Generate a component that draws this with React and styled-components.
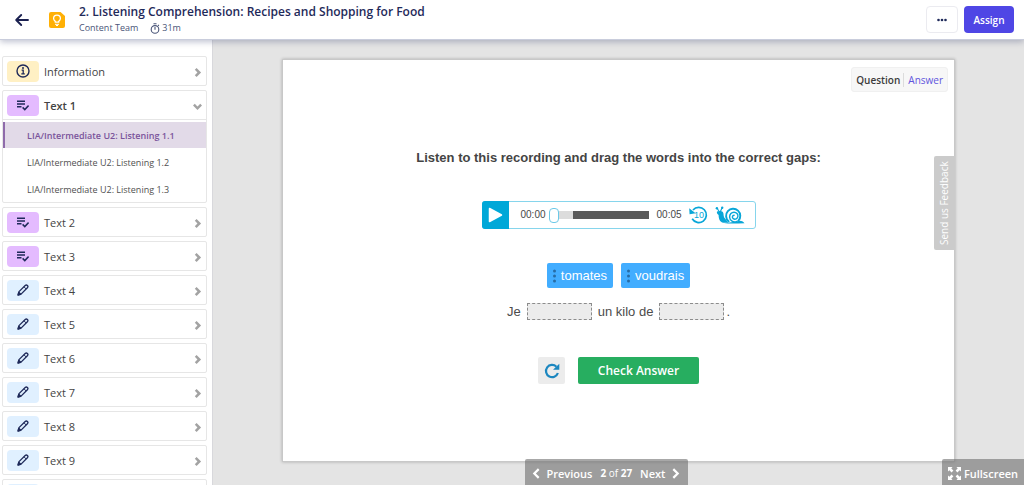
import React from "react";
import styled, { createGlobalStyle, css } from "styled-components";

const ui = `"Open Sans", "Noto Sans", sans-serif`;
const arial = `"Liberation Sans", Arial, sans-serif`;

const GlobalStyle = createGlobalStyle`
  *, *::before, *::after { box-sizing: border-box; }
  body { margin: 0; font-family: ${ui}; color: #444; background: #fff; }
  button { font: inherit; color: inherit; border: 0; padding: 0; background: none; cursor: pointer; }
  h1, h2, p, ul { margin: 0; padding: 0; }
  ul { list-style: none; }
  svg { display: block; flex: none; }
`;

const Page = styled.div`
  height: 100vh;
  display: flex;
  flex-direction: column;
  overflow: hidden;
`;

const Header = styled.header`
  position: relative;
  z-index: 2;
  flex: none;
  height: 40px;
  display: flex;
  align-items: center;
  padding: 0 10px 0 14px;
  background: #fff;
  border-bottom: 1px solid #c9cddc;
  box-shadow: 0 2px 6px rgba(30, 40, 90, 0.28);
  color: #1f2a5a;
`;

const BackButton = styled.button`
  display: flex;
  margin-right: 19px;
  color: #1b2150;
`;

const Heading = styled.div`
  flex: 1;
  margin-left: 14px;
  padding-top: 1px;
`;

const Title = styled.h1`
  font-size: 12px;
  line-height: 16px;
  font-weight: 600;
`;

const Meta = styled.p`
  display: flex;
  align-items: center;
  gap: 12px;
  font-size: 9px;
  line-height: 16px;
  color: #4a5578;
`;

const Duration = styled.span`
  display: flex;
  align-items: center;
  gap: 2px;
`;

const HeaderButton = styled.button`
  height: 27px;
  border-radius: 4px;
  font-size: 10px;
  font-weight: 600;
  display: flex;
  align-items: center;
  justify-content: center;
  ${(p) =>
    p.$primary
      ? css`
          width: 50px;
          background: #4f46e5;
          color: #fff;
        `
      : css`
          width: 32px;
          margin-right: 6px;
          border: 1px solid #ebebf0;
        `}
`;

const Body = styled.div`
  flex: 1;
  min-height: 0;
  display: flex;
`;

const Sidebar = styled.nav`
  flex: none;
  width: 212px;
  padding: 16px 5px 0 2px;
  background: #fff;
  overflow: hidden;
`;

const SectionList = styled.ul`
  display: flex;
  flex-direction: column;
  gap: 4px;
`;

const Section = styled.li`
  border: 1px solid #e6e6e6;
  border-radius: 2px;
`;

const SectionButton = styled.button`
  width: 100%;
  height: 28px;
  display: flex;
  align-items: center;
  padding: 0 4px;
  font-size: 11px;
  font-weight: ${(p) => (p.$open ? 600 : 400)};
  text-align: left;
`;

const tones = { info: "#fff0c4", list: "#e4bbff", edit: "#e0f0ff" };

const Badge = styled.span`
  width: 32px;
  height: 21px;
  margin-right: 5px;
  display: flex;
  align-items: center;
  justify-content: center;
  border-radius: 4px;
  background: ${(p) => tones[p.$kind]};
  color: #1f2a5a;
`;

const Label = styled.span`
  flex: 1;
`;

const Chevron = styled.span`
  padding-top: 2px;
  color: #a3a3a3;
`;

const Lessons = styled.ul`
  display: flex;
  flex-direction: column;
  gap: 1px;
  padding-top: 2px;
  border-top: 1px solid #e6e6e6;
`;

const Lesson = styled.a`
  display: block;
  height: 26px;
  padding-left: 22px;
  border-left: 2px solid ${(p) => (p.$active ? "#8f6bab" : "transparent")};
  background: ${(p) => (p.$active ? "#e2dae8" : "none")};
  color: ${(p) => (p.$active ? "#7a549b" : "#505050")};
  font-size: 9px;
  line-height: 28px;
  font-weight: ${(p) => (p.$active ? 600 : 400)};
  text-decoration: none;
`;

const Stage = styled.main`
  position: relative;
  flex: 1;
  display: flex;
  padding: 19px 69px 23px 70px;
  background: #e4e4e4;
  box-shadow: inset 1px 0 0 #d8d8dc;
`;

const Slide = styled.section`
  position: relative;
  flex: 1;
  display: flex;
  flex-direction: column;
  align-items: center;
  background: #fff;
  border: 1px solid #c8c8c8;
  box-shadow: 0 0 3px rgba(0, 0, 0, 0.25);
`;

const ViewSwitch = styled.div`
  align-self: flex-end;
  display: flex;
  align-items: center;
  height: 25px;
  margin: 7px 6px 0 0;
  padding: 0 4px;
  border: 1px solid #f0f0f0;
  border-radius: 3px;
  background: #f7f7f7;
  font-size: 10px;
`;

const ViewOption = styled.button`
  line-height: 14px;
  font-weight: ${(p) => (p.$active ? 600 : 400)};
  color: ${(p) => (p.$active ? "#3c3c3c" : "#6155dd")};
  & + & {
    margin-left: 3px;
    padding-left: 4px;
    border-left: 1px solid #dcdcdc;
  }
`;

const Prompt = styled.h2`
  margin-top: 56px;
  font: 700 13px/20px ${arial};
  color: #444;
`;

const Player = styled.div`
  display: flex;
  align-items: center;
  width: 274px;
  height: 28px;
  margin-top: 33px;
  border: 1px solid #86d5ec;
  border-radius: 3px;
  font: 10px/14px ${arial};
  color: #484848;
`;

const PlayButton = styled.button`
  width: 27px;
  height: 28px;
  margin: -1px 12px -1px -1px;
  display: flex;
  align-items: center;
  justify-content: center;
  border-radius: 3px 0 0 3px;
  background: #00a8d8;
`;

const Track = styled.input`
  appearance: none;
  width: 100px;
  height: 16px;
  margin: 0 8px 0 3px;
  background: linear-gradient(90deg, #dcdcdc 24px, #5a5a5a 24px) center / 100% 8px no-repeat;
  &::-webkit-slider-thumb {
    appearance: none;
    width: 10px;
    height: 15px;
    border: 1px solid #6cc9e8;
    border-radius: 4px;
    background: #fff;
  }
`;

const PlayerTool = styled.button`
  display: flex;
  margin-left: 7px;
  color: #08a6d8;
`;

const WordBank = styled.div`
  display: flex;
  gap: 8px;
  margin-top: 34px;
`;

const Word = styled.button`
  height: 25px;
  display: flex;
  align-items: center;
  gap: 5px;
  padding: 0 6px;
  border-radius: 2px;
  background: #42adff;
  color: #fff;
  font: 13px/16px ${arial};
`;

const Sentence = styled.p`
  display: flex;
  align-items: center;
  gap: 6px;
  margin-top: 15px;
  font: 13px/17px ${arial};
  color: #4c4c4c;
`;

const Gap = styled.input`
  width: 65px;
  height: 17px;
  padding: 0;
  border: 1px dashed #8c8c8c;
  border-radius: 0;
  background: #ececec;
`;

const LastGap = styled.span`
  display: flex;
  align-items: center;
  gap: 2px;
`;

const Actions = styled.div`
  display: flex;
  gap: 13px;
  margin-top: 37px;
`;

const ResetButton = styled.button`
  width: 27px;
  height: 27px;
  display: flex;
  align-items: center;
  justify-content: center;
  border-radius: 2px;
  background: #ececec;
`;

const CheckButton = styled.button`
  width: 121px;
  height: 27px;
  border-radius: 2px;
  background: #27ae60;
  color: #fff;
  font-size: 12px;
  font-weight: 600;
`;

const Feedback = styled.button`
  position: absolute;
  right: -1px;
  top: 96px;
  width: 21px;
  height: 94px;
  border-radius: 0 2px 2px 0;
  background: #cbcbcb;
  color: #fff;
  font-size: 10px;
  line-height: 21px;
  writing-mode: vertical-rl;
  transform: rotate(180deg);
`;

const overlay = css`
  position: absolute;
  bottom: 0;
  height: 26px;
  display: flex;
  align-items: center;
  justify-content: center;
  padding-top: 2px;
  background: rgba(110, 110, 110, 0.6);
  color: #fff;
  font-size: 11px;
  font-weight: 600;
`;

const Pager = styled.div`
  ${overlay}
  left: 0;
  right: 24px;
  width: 163px;
  margin: 0 auto;
  gap: 8px;
  border-radius: 2px 2px 0 0;
`;

const PagerButton = styled.button`
  display: flex;
  align-items: center;
  gap: 5px;
`;

const PageCount = styled.span`
  font-size: 10px;
  font-weight: 400;
`;

const Fullscreen = styled.button`
  ${overlay}
  right: 0;
  width: 82px;
  gap: 3px;
  border-radius: 2px 0 0 0;
`;

const BackIcon = () => (
  <svg width="16" height="14" viewBox="0 0 16 14" fill="none" stroke="currentColor" strokeWidth="1.900" strokeLinecap="round" strokeLinejoin="round">
    <path d="M14 7H2.500M7.200 2 2.200 7l5 5" />
  </svg>
);

const TimerIcon = () => (
  <svg width="10" height="11" viewBox="0 0 10 11" fill="none" stroke="currentColor" strokeWidth="1.100">
    <circle cx="5" cy="6.400" r="3.800" />
    <path d="M3.500.8h3M5 4v2.800M8 2.800l.9-.9" />
  </svg>
);

const TipIcon = () => (
  <svg width="16" height="16" viewBox="0 0 16 16">
    <path d="M2 0h9.500L16 4v10a2 2 0 0 1-2 2H2a2 2 0 0 1-2-2V2a2 2 0 0 1 2-2z" fill="#ffb005" />
    <path d="M6.300 10.200V9.400C5.200 8.700 4.600 7.800 4.600 6.600a3.400 3.400 0 0 1 6.800 0c0 1.200-.6 2.100-1.700 2.800v.8z" fill="none" stroke="#fff" strokeWidth="1.300" />
    <path d="M6 12.300h4M7 13.500h2" stroke="#fff" strokeWidth="1" />
  </svg>
);

const InfoIcon = () => (
  <svg width="14" height="14" viewBox="0 0 14 14" fill="none" stroke="currentColor">
    <circle cx="7" cy="7" r="6" strokeWidth="1.400" />
    <path d="M5.600 6.200H7.200V9.800M5.300 9.900h3.500" strokeWidth="1.300" />
    <circle cx="7" cy="4" r="1" fill="currentColor" stroke="none" />
  </svg>
);

const ChecklistIcon = () => (
  <svg width="12" height="11" viewBox="0 0 12 11" fill="none" stroke="currentColor">
    <path d="M0 1.300h8M0 4h8M0 6.700h4.500" strokeWidth="1.500" />
    <path d="M5.600 7.400 7.800 9.500 11.600 5.600" strokeWidth="1.600" />
  </svg>
);

const PencilIcon = () => (
  <svg width="12" height="12" viewBox="0 0 12 12" fill="none" stroke="currentColor" strokeWidth="1.300" strokeLinejoin="round">
    <path d="M1.200 10.800 2 7.600 8.200 1.500a1.500 1.500 0 0 1 2.200 2.200L4.300 9.900z" />
    <path d="M7 2.800 9.200 5" strokeWidth="1" />
    <path d="M1 11 1.700 8.300 3.700 10.300z" fill="currentColor" />
  </svg>
);

const turns = { right: 0, down: 90, left: 180 };

const ChevronIcon = ({ to, size, weight }) => (
  <svg width={size} height={size} viewBox="0 0 10 10" fill="none" stroke="currentColor" strokeWidth={weight}>
    <path d="M3 1 7 5 3 9" transform={`rotate(${turns[to]} 5 5)`} />
  </svg>
);

const PlayIcon = () => (
  <svg width="15" height="16" viewBox="0 0 15 16">
    <path d="M1.500 1.500v13L13.500 8z" fill="#fff" stroke="#fff" strokeWidth="1.500" strokeLinejoin="round" />
  </svg>
);

const ReplayIcon = () => (
  <svg width="19" height="18" viewBox="0 0 19 18">
    <path d="M4 4A7.600 7.600 0 1 1 3.200 12.800" fill="none" stroke="currentColor" strokeWidth="1.700" />
    <path d="M.2 2.200.6 8.200 6.600 7.200z" fill="currentColor" />
    <text x="10" y="12" fontSize="9" textAnchor="middle" fill="currentColor" fontFamily="Liberation Sans, sans-serif">10</text>
  </svg>
);

const SnailIcon = () => (
  <svg width="30" height="18" viewBox="0 0 30 18" fill="none" stroke="currentColor" strokeLinecap="round">
    <path d="M4.200 5.500 2.200 2.500M5.400 5.500 7 2" strokeWidth="1.100" />
    <circle cx="1.900" cy="2.200" r="1.200" fill="currentColor" stroke="none" />
    <circle cx="7.200" cy="1.800" r="1.200" fill="currentColor" stroke="none" />
    <path d="M2 5.500C3.500 4.600 6.500 4.600 7.800 6c1.200 1.500.4 3.500 1.400 5.500L13.500 16.800H8.500C4.600 16 3.600 12.500 3.600 9 2.400 8.300 1.500 6.800 2 5.500z" fill="currentColor" stroke="none" />
    <path d="M9 17.200C14 17.600 22 17.500 29.500 17.200 28 15.200 26.500 14.900 24.800 14.700L22 15.500z" fill="currentColor" stroke="none" />
    <path d="M13.600 15.300A7.100 7.100 0 1 1 23.300 14.800" strokeWidth="1.900" />
    <path d="M22 15.300C18.500 17 14.800 14.500 14.600 11.200 14.500 8.200 16.600 6.200 19 6.200c2.500 0 4.200 2 3.900 4.200-.3 2.300-2.800 3.500-4.600 2.300-1.500-1.100-1.100-3.400.8-3.500" strokeWidth="1.400" />
  </svg>
);

const GripIcon = () => (
  <svg width="3" height="14" viewBox="0 0 3 14" fill="#276ca5">
    <circle cx="1.500" cy="2" r="1.500" />
    <circle cx="1.500" cy="7" r="1.500" />
    <circle cx="1.500" cy="12" r="1.500" />
  </svg>
);

const ResetIcon = () => (
  <svg width="16" height="16" viewBox="0 0 16 16">
    <path d="M12.400 3.700A6.100 6.100 0 1 0 13.900 10" fill="none" stroke="#1c87c0" strokeWidth="2.200" />
    <path d="M15.300.8V6.800H9z" fill="#1c87c0" />
  </svg>
);

const ExpandIcon = () => (
  <svg width="13" height="13" viewBox="0 0 13 13" fill="currentColor">
    {[0, 90, 180, 270].map((angle) => (
      <path key={angle} d="M0 0H4.500L3.300 1.400 5.400 3.600 3.600 5.400 1.400 3.300 0 4.500z" transform={`rotate(${angle} 6.500 6.500)`} />
    ))}
  </svg>
);

const badgeIcons = {
  info: <InfoIcon />,
  list: <ChecklistIcon />,
  edit: <PencilIcon />,
};

const sections = [
  { label: "Information", kind: "info" },
  {
    label: "Text 1",
    kind: "list",
    lessons: [
      "LIA/Intermediate U2: Listening 1.1",
      "LIA/Intermediate U2: Listening 1.2",
      "LIA/Intermediate U2: Listening 1.3",
    ],
  },
  { label: "Text 2", kind: "list" },
  { label: "Text 3", kind: "list" },
  { label: "Text 4", kind: "edit" },
  { label: "Text 5", kind: "edit" },
  { label: "Text 6", kind: "edit" },
  { label: "Text 7", kind: "edit" },
  { label: "Text 8", kind: "edit" },
  { label: "Text 9", kind: "edit" },
  { label: "Text 10", kind: "edit" },
];

export default function App() {
  return (
    <Page>
      <GlobalStyle />
      <Header>
        <BackButton aria-label="Back">
          <BackIcon />
        </BackButton>
        <TipIcon />
        <Heading>
          <Title>2. Listening Comprehension: Recipes and Shopping for Food</Title>
          <Meta>
            <span>Content Team</span>
            <Duration>
              <TimerIcon />
              31m
            </Duration>
          </Meta>
        </Heading>
        <HeaderButton aria-label="More options">
          <svg width="10" height="4" viewBox="0 0 10 4" fill="currentColor">
            <circle cx="1.500" cy="2" r="1.300" />
            <circle cx="5" cy="2" r="1.300" />
            <circle cx="8.500" cy="2" r="1.300" />
          </svg>
        </HeaderButton>
        <HeaderButton $primary>Assign</HeaderButton>
      </Header>
      <Body>
        <Sidebar aria-label="Contents">
          <SectionList>
            {sections.map(({ label, kind, lessons }) => (
              <Section key={label}>
                <SectionButton $open={!!lessons} aria-expanded={!!lessons}>
                  <Badge $kind={kind}>{badgeIcons[kind]}</Badge>
                  <Label>{label}</Label>
                  <Chevron>
                    <ChevronIcon to={lessons ? "down" : "right"} size={9} weight={2.8} />
                  </Chevron>
                </SectionButton>
                {lessons && (
                  <Lessons>
                    {lessons.map((name, i) => (
                      <li key={name}>
                        <Lesson href="#" $active={i === 0}>
                          {name}
                        </Lesson>
                      </li>
                    ))}
                  </Lessons>
                )}
              </Section>
            ))}
          </SectionList>
        </Sidebar>
        <Stage>
          <Slide>
            <ViewSwitch>
              <ViewOption $active>Question</ViewOption>
              <ViewOption>Answer</ViewOption>
            </ViewSwitch>
            <Prompt>Listen to this recording and drag the words into the correct gaps:</Prompt>
            <Player>
              <PlayButton aria-label="Play">
                <PlayIcon />
              </PlayButton>
              <span>00:00</span>
              <Track type="range" min="0" max="5" defaultValue="0" aria-label="Position" />
              <span>00:05</span>
              <PlayerTool aria-label="Back 10 seconds">
                <ReplayIcon />
              </PlayerTool>
              <PlayerTool aria-label="Play slowly">
                <SnailIcon />
              </PlayerTool>
            </Player>
            <WordBank>
              {["tomates", "voudrais"].map((word) => (
                <Word key={word}>
                  <GripIcon />
                  {word}
                </Word>
              ))}
            </WordBank>
            <Sentence>
              <span>Je</span>
              <Gap aria-label="First gap" />
              <span>un kilo de</span>
              <LastGap>
                <Gap aria-label="Second gap" />
                <span>.</span>
              </LastGap>
            </Sentence>
            <Actions>
              <ResetButton aria-label="Reset">
                <ResetIcon />
              </ResetButton>
              <CheckButton>Check Answer</CheckButton>
            </Actions>
            <Feedback>Send us Feedback</Feedback>
          </Slide>
          <Pager>
            <PagerButton>
              <ChevronIcon to="left" size={11} weight={2} />
              Previous
            </PagerButton>
            <PageCount>
              <b>2</b> of <b>27</b>
            </PageCount>
            <PagerButton>
              Next
              <ChevronIcon to="right" size={11} weight={2} />
            </PagerButton>
          </Pager>
          <Fullscreen>
            <ExpandIcon />
            Fullscreen
          </Fullscreen>
        </Stage>
      </Body>
    </Page>
  );
}
